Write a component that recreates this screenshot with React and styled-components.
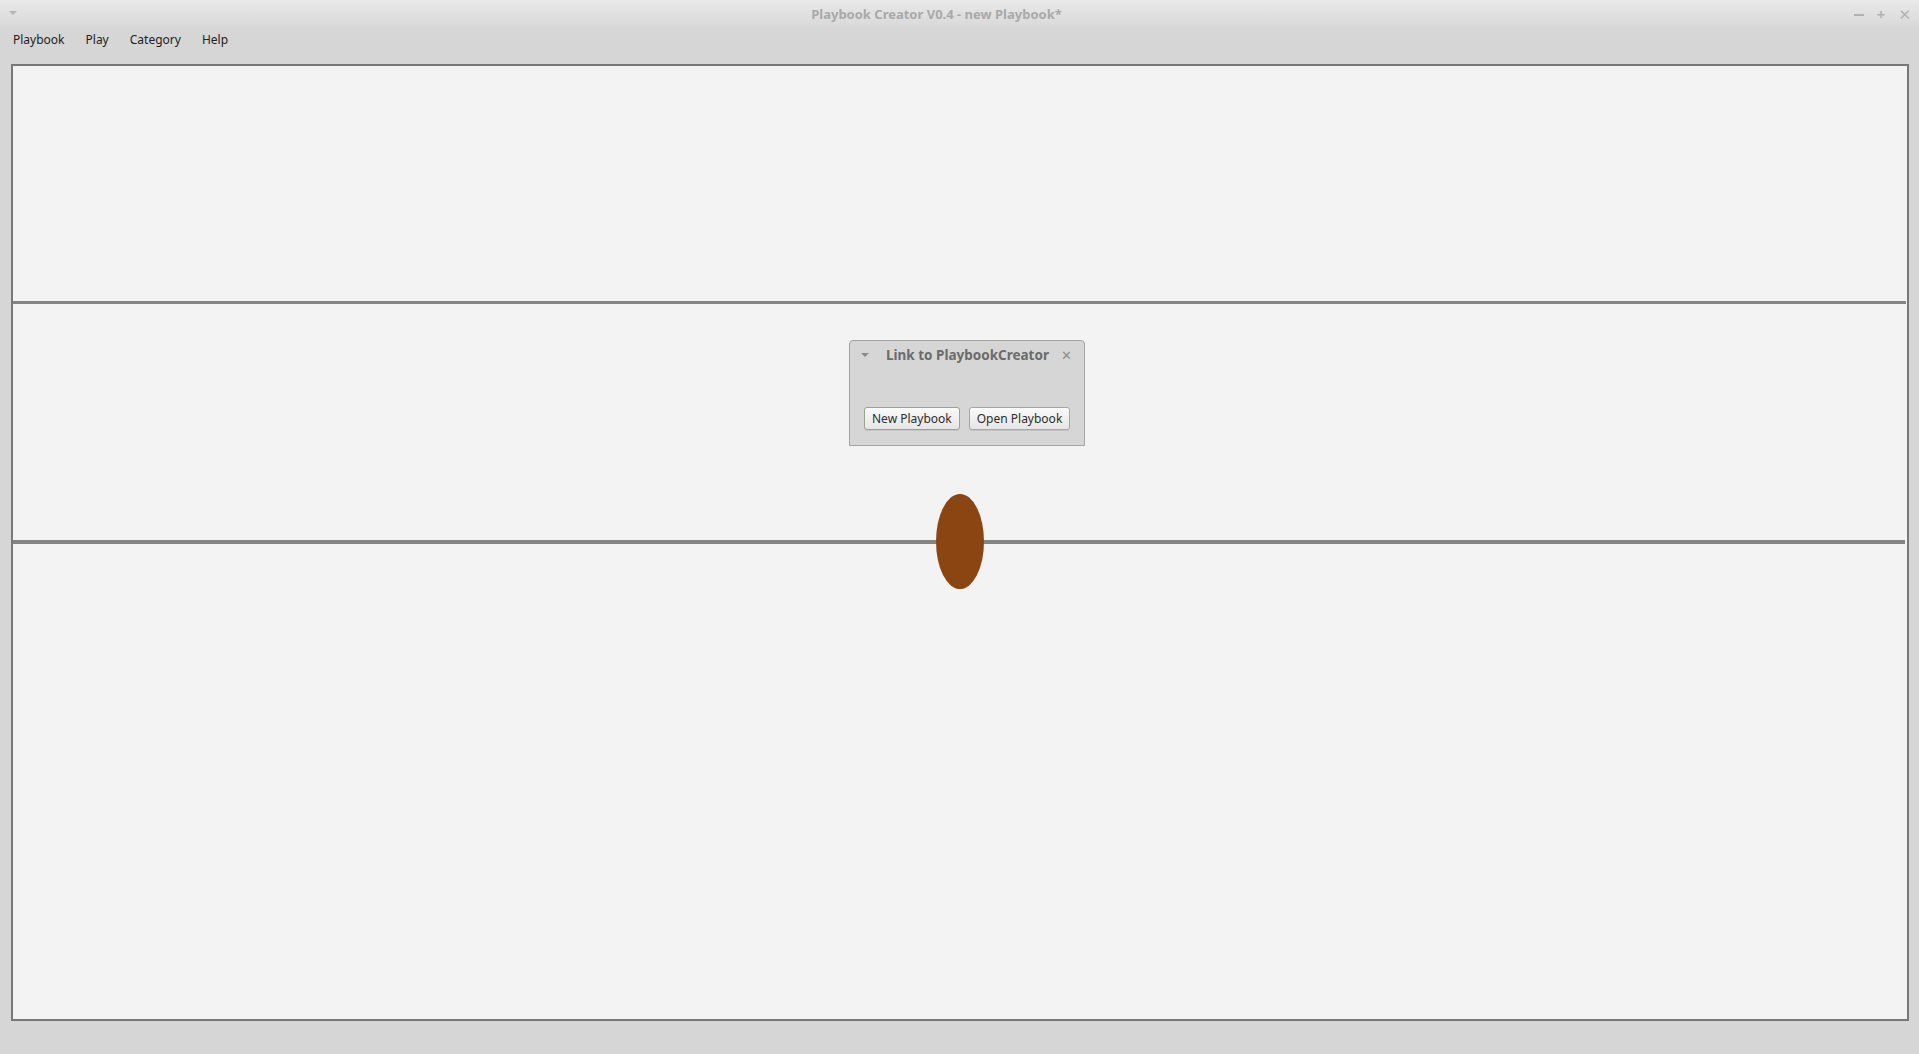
import styled, { createGlobalStyle } from "styled-components"

const Global = createGlobalStyle`
    html, body {
        margin: 0;
        padding: 0;
        background: #d6d6d6;
        font-family: "Noto Sans", "DejaVu Sans", sans-serif;
    }
`

const Window = styled.div`
    display: flex;
    flex-direction: column;
    width: 1919px;
    height: 1054px;
    background: #d6d6d6;
    overflow: hidden;
`

const TitleBar = styled.div`
    display: grid;
    grid-template-columns: 80px 1fr 80px;
    align-items: center;
    height: 28px;
    background: linear-gradient(#e9e9e9, #d8d8d8);
    color: #a9a9a9;
`

const TitleText = styled.div`
    text-align: center;
    font-size: 13px;
    font-weight: bold;
    padding-right: 46px;
`

const Arrow = styled.span`
    display: inline-block;
    width: 0;
    height: 0;
    border-left: ${props => props.size}px solid transparent;
    border-right: ${props => props.size}px solid transparent;
    border-top: ${props => props.size}px solid ${props => props.color};
`

const LeftCorner = styled.div`
    display: flex;
    align-items: center;
    padding-left: 9px;
    padding-bottom: 3px;
`

const Controls = styled.div`
    display: flex;
    justify-content: flex-end;
    align-items: center;
    gap: 13px;
    padding-right: 8px;
    font-size: 15px;
    font-weight: bold;
    color: #b2b2b2;
`

const MinusBar = styled.span`
    display: inline-block;
    width: 10px;
    height: 2px;
    background: #b2b2b2;
    margin-top: 2px;
`

const MenuBar = styled.div`
    display: flex;
    gap: 21px;
    height: 22px;
    align-items: center;
    padding-left: 13px;
    font-size: 12px;
    color: #222;
`

const MenuItem = styled.span``

const Field = styled.div`
    position: relative;
    display: flex;
    flex-direction: column;
    margin: 14px 10px 33px 11px;
    flex: 1;
    border: 2px solid #787878;
    background: #f3f3f3;
`

const Zone = styled.div`
    height: ${props => props.h}px;
    flex: ${props => props.grow ? 1 : "none"};
`

const YardLine = styled.div`
    height: ${props => props.thick}px;
    background: #848484;
    margin-right: ${props => props.cut}px;
`

const Ball = styled.div`
    position: absolute;
    left: 923px;
    top: 428px;
    width: 48px;
    height: 95px;
    border-radius: 50%;
    background: #8b4513;
`

const Dialog = styled.div`
    position: absolute;
    left: 836px;
    top: 274px;
    width: 234px;
    height: 104px;
    display: flex;
    flex-direction: column;
    background: #d6d6d6;
    border: 1px solid #a3a3a3;
    border-radius: 4px 4px 0 0;
`

const DialogHead = styled.div`
    display: flex;
    align-items: center;
    height: 28px;
    padding: 0 12px 0 11px;
    color: #6b6b6b;
`

const DialogTitle = styled.span`
    flex: 1;
    padding-left: 17px;
    font-size: 13.5px;
    font-weight: bold;
`

const Close = styled.span`
    font-size: 13px;
    font-weight: bold;
    color: #8e8e8e;
`

const ButtonRow = styled.div`
    display: flex;
    gap: 9px;
    padding: 38px 0 0 14px;
`

const Button = styled.button`
    height: 23px;
    padding: 0 7px;
    font-family: "Noto Sans", "DejaVu Sans", sans-serif;
    font-size: 12px;
    color: #2d2d2d;
    background: linear-gradient(#fafafa, #e6e6e6);
    border: 1px solid ${props => props.focused ? "#93a888" : "#a6a6a6"};
    border-radius: 3px;
    box-shadow: 0 1px 0 rgba(0,0,0,0.08);
`

const App = () => {
    return (
        <Window>
            <Global />
            <TitleBar>
                <LeftCorner><Arrow size={4} color="#b5b5b5" /></LeftCorner>
                <TitleText>Playbook Creator V0.4 - new Playbook*</TitleText>
                <Controls>
                    <MinusBar />
                    <span>+</span>
                    <span>✕</span>
                </Controls>
            </TitleBar>
            <MenuBar>
                <MenuItem>Playbook</MenuItem>
                <MenuItem>Play</MenuItem>
                <MenuItem>Category</MenuItem>
                <MenuItem>Help</MenuItem>
            </MenuBar>
            <Field>
                <Zone h={235} />
                <YardLine thick={3} cut={1} />
                <Zone h={236} />
                <YardLine thick={4} cut={2} />
                <Zone grow />
                <Ball />
                <Dialog>
                    <DialogHead>
                        <Arrow size={4} color="#8a8a8a" />
                        <DialogTitle>Link to PlaybookCreator</DialogTitle>
                        <Close>✕</Close>
                    </DialogHead>
                    <ButtonRow>
                        <Button focused>New Playbook</Button>
                        <Button>Open Playbook</Button>
                    </ButtonRow>
                </Dialog>
            </Field>
        </Window>
    )
}

export default App
